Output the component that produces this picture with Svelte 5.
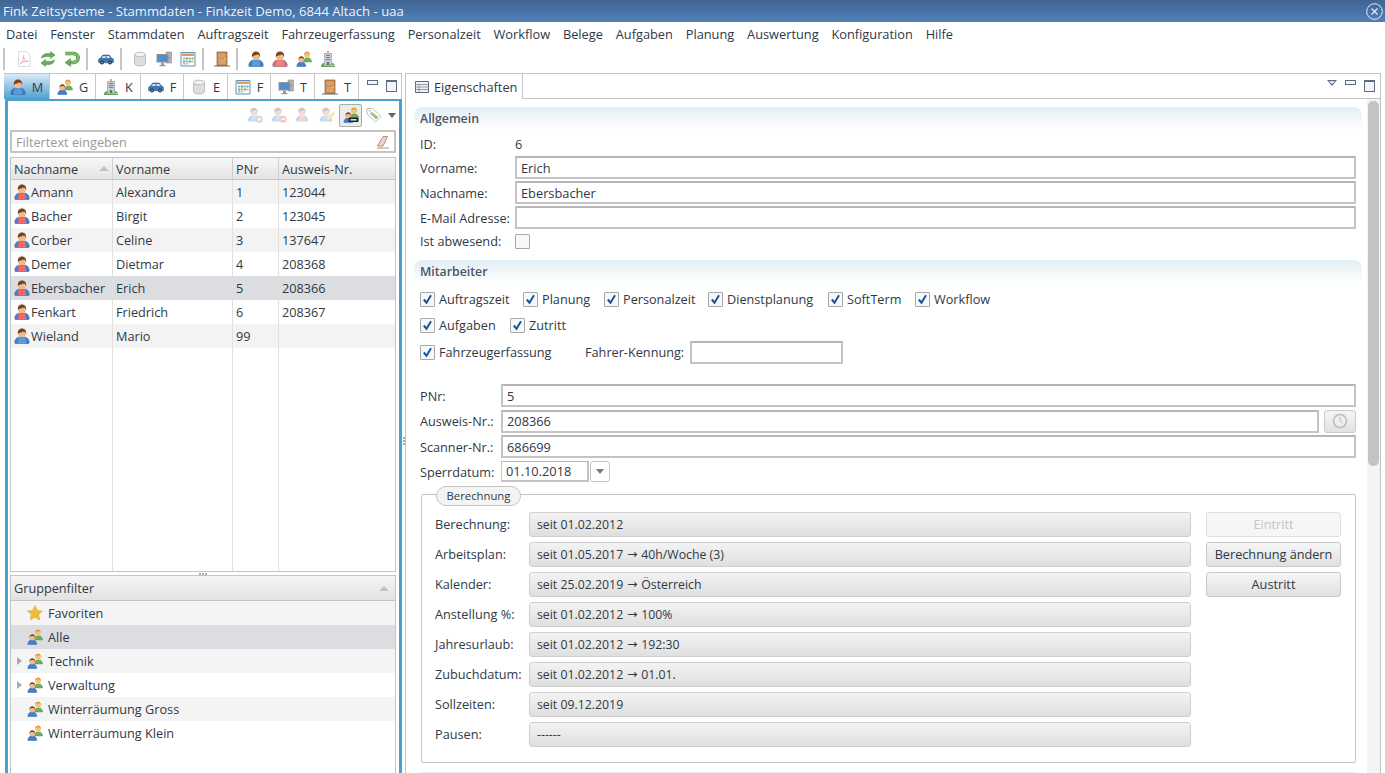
<script lang="ts">
  const menus = ['Datei','Fenster','Stammdaten','Auftragszeit','Fahrzeugerfassung','Personalzeit','Workflow','Belege','Aufgaben','Planung','Auswertung','Konfiguration','Hilfe'];
  const tabs = [
    { icon: 'person', label: 'M', w: 46 },
    { icon: 'group', label: 'G', w: 46 },
    { icon: 'building', label: 'K', w: 45 },
    { icon: 'car', label: 'F', w: 43 },
    { icon: 'db', label: 'E', w: 44 },
    { icon: 'cal', label: 'F', w: 43 },
    { icon: 'monitor', label: 'T', w: 44 },
    { icon: 'door', label: 'T', w: 44 },
  ];
  const people = [
    ['Amann','Alexandra','1','123044'],
    ['Bacher','Birgit','2','123045'],
    ['Corber','Celine','3','137647'],
    ['Demer','Dietmar','4','208368'],
    ['Ebersbacher','Erich','5','208366'],
    ['Fenkart','Friedrich','6','208367'],
    ['Wieland','Mario','99',''],
  ];
  const groups = [
    { name: 'Favoriten', icon: 'star', arrow: false },
    { name: 'Alle', icon: 'group', arrow: false },
    { name: 'Technik', icon: 'group', arrow: true },
    { name: 'Verwaltung', icon: 'group', arrow: true },
    { name: 'Winterräumung Gross', icon: 'group', arrow: false },
    { name: 'Winterräumung Klein', icon: 'group', arrow: false },
  ];
  const calc = [
    ['Berechnung:','seit 01.02.2012',''],
    ['Arbeitsplan:','seit 01.05.2017','40h/Woche (3)'],
    ['Kalender:','seit 25.02.2019','Österreich'],
    ['Anstellung %:','seit 01.02.2012','100%'],
    ['Jahresurlaub:','seit 01.02.2012','192:30'],
    ['Zubuchdatum:','seit 01.02.2012','01.01.'],
    ['Sollzeiten:','seit 09.12.2019',''],
    ['Pausen:','------',''],
  ];
</script>

{#snippet person(arms = '#3f7fd0', torso = '#5a9be0')}
  <svg class="ic" viewBox="0 0 16 16">
    <path d="M.8 14.500c0-2.800 1.400-4.500 3.700-5.300h7c2.300.8 3.700 2.500 3.700 5.300 0 .6-.4 1-1 1H1.800c-.6 0-1-.4-1-1z" fill={arms} stroke="#2a558f" stroke-width=".5"/>
    <path d="M4.500 9.200h7l.6 6.300H3.900z" fill={torso}/>
    <circle cx="8" cy="5.200" r="3.900" fill="#edb98f"/>
    <path d="M3.900 6C3.300 2.300 5.800.6 8 .6s4.700 1.700 4.100 5.400c-.5-1.500-1.300-2.300-2.300-2.600C8.300 4.200 5 4.200 3.900 6z" fill="#7a4420"/>
  </svg>
{/snippet}

{#snippet badged(torso: string, badge: string)}
  <svg class="ic dim" viewBox="0 0 16 16">
    <path d="M.8 13.500c0-2.500 1.400-4 3.200-4.700h6c1.800.7 3.200 2.200 3.200 4.700 0 .6-.4 1-1 1H1.800c-.6 0-1-.4-1-1z" fill="#8fbbe6"/>
    <path d="M4.500 8.800h5l.6 5.700H3.900z" fill={torso}/>
    <circle cx="7" cy="4.800" r="3.600" fill="#e5c4ab"/>
    <path d="M3.400 5.200C3 2.300 5 .8 7 .8s4 1.500 3.600 4.400c-.5-1.200-1.200-1.800-2-2C7 3.800 4.400 3.800 3.400 5.200z" fill="#b59377"/>
    {#if badge === 'add'}
      <circle cx="12.200" cy="12.200" r="3.500" fill="#a9bfa0"/><path d="M10.300 12.200h3.800M12.200 10.300v3.800" stroke="#fff" stroke-width="1.200"/>
    {:else if badge === 'del'}
      <circle cx="12.200" cy="12.200" r="3.500" fill="#eba58f"/><path d="M10.300 12.200h3.800" stroke="#fff" stroke-width="1.400"/>
    {:else if badge === 'edit'}
      <path d="M7.500 13.500l.6-2.700 6-6 2 2-6 6z" fill="#f2d596" stroke="#e0bf7a" stroke-width=".5"/>
    {/if}
  </svg>
{/snippet}

{#snippet group(chain = false)}
  <svg class="ic" viewBox="0 0 16 16">
    <path d="M7 11c0-2 1.500-3.500 3-4h3c1.500.5 2.500 2 2.500 4z" fill="#6fae5a" stroke="#4a8a3e" stroke-width=".4"/>
    <circle cx="11" cy="3.800" r="2.900" fill="#efc483"/>
    <path d="M8.200 3.800C8 1.500 10 .6 11 .6s3 .9 2.800 3.200c-.5-.9-1.600-1.500-2.800-1.500s-2.300.6-2.800 1.500z" fill="#d99a33"/>
    <path d="M.8 15.500c0-2.500 1.500-4 3-4.500h3c1.500.5 3 2 3 4.500z" fill="#3f7fd0" stroke="#2a558f" stroke-width=".4"/>
    <circle cx="5.300" cy="8.500" r="2.900" fill="#edb98f"/>
    <path d="M2.500 8.500C2.300 6.200 4.300 5.300 5.300 5.300s3 .9 2.800 3.200c-.6-.9-1.600-1.400-2.800-1.400s-2.200.5-2.800 1.400z" fill="#7a4420"/>
    {#if chain}
      <rect x="5.500" y="10.500" width="10" height="4.600" rx="1.200" fill="#222"/>
      <rect x="7.500" y="12" width="6" height="1.600" fill="#ddd"/>
    {/if}
  </svg>
{/snippet}

{#snippet building()}
  <svg class="ic" viewBox="0 0 16 16">
    <path d="M8 0v2.500" stroke="#d04040"/>
    <path d="M4.500 2.500h7v11.500h-7z" fill="#c6d0d6" stroke="#7c8a92" stroke-width=".6"/>
    <path d="M6 4.500h4M6 6.500h4M6 8.500h4" stroke="#4f86bd"/>
    <path d="M6.800 11h2.400v3H6.800z" fill="#66727a"/>
    <path d="M1 15c.5-2 1.500-3 3-3v3zM15 15c-.5-2-1.500-3-3-3v3zM1 14.500h14V16H1z" fill="#63a650"/>
  </svg>
{/snippet}

{#snippet car()}
  <svg class="ic" viewBox="0 0 16 16">
    <path d="M.5 11V8.800c0-1 1-1.500 2-1.800l1.800-2.500c.3-.4.6-.5 1-.5h5.400c.4 0 .7.100 1 .5L13.500 7c1 .2 2 .8 2 1.800V11c0 .4-.3.800-.8.800H1.300c-.5 0-.8-.4-.8-.8z" fill="#3f78b8" stroke="#264f80" stroke-width=".5"/>
    <path d="M5 5h2.500v2H3.600zM8.500 5H11l1.300 2H8.500z" fill="#cfe2f2"/>
    <circle cx="4" cy="11.500" r="1.900" fill="#333"/><circle cx="12" cy="11.500" r="1.900" fill="#333"/>
    <circle cx="4" cy="11.500" r=".8" fill="#bbb"/><circle cx="12" cy="11.500" r=".8" fill="#bbb"/>
  </svg>
{/snippet}

{#snippet db()}
  <svg class="ic" viewBox="0 0 16 16">
    <path d="M2.500 3.500v9c0 1.400 2.500 2.500 5.500 2.500s5.500-1.100 5.500-2.500v-9z" fill="#dedede" stroke="#a9a9a9" stroke-width=".7"/>
    <ellipse cx="8" cy="3.500" rx="5.500" ry="2.300" fill="#f2f2f2" stroke="#a9a9a9" stroke-width=".7"/>
  </svg>
{/snippet}

{#snippet monitor()}
  <svg class="ic" viewBox="0 0 16 16">
    <path d="M10 1h5.500v11H10z" fill="#b4b4b4" stroke="#7f7f7f" stroke-width=".5"/>
    <path d="M.5 3h12v8.500H.5z" fill="#8f9498"/>
    <path d="M1.500 4h10v6.500h-10z" fill="#4f8fcf"/>
    <path d="M5 11.500h3V14H5zM3.500 14h6v1.200h-6z" fill="#9a9a9a"/>
    <path d="M12.500 6h2v1h-2z" fill="#5aa95a"/>
  </svg>
{/snippet}

{#snippet cal()}
  <svg class="ic" viewBox="0 0 16 16">
    <path d="M1 1.500h14v13.500H1z" fill="#fff" stroke="#5d8fc0"/>
    <path d="M2 2.500h12v2.500H2z" fill="#e8975a"/>
    <path d="M3 6.500h2.500v2H3zM9 6.500h2.500v2H9zM6 9.500h2.500v2H6zM3 12h2.500v1.500H3z" fill="#8fb7da"/>
    <path d="M6 6.500h2.500v2H6zM3 9.500h2.500v2H3zM9 9.500h2.500v2H9zM12 6.500h1.500v2H12z" fill="#72b06a"/>
    <path d="M6 12h2.500v1.500H6zM12 9.500h1.500v2H12z" fill="#e9c46a"/>
  </svg>
{/snippet}

{#snippet door()}
  <svg class="ic" viewBox="0 0 16 16">
    <path d="M3 1h10v13.500H3z" fill="#c88e52" stroke="#8a5a2c" stroke-width=".7"/>
    <path d="M4.500 2.500h7v4h-7zM4.500 8h7v5h-7z" fill="#d6a36c"/>
    <circle cx="11.300" cy="8" r=".9" fill="#f2d24a"/>
    <path d="M0 15h16" stroke="#666"/>
  </svg>
{/snippet}

{#snippet pdf()}
  <svg class="ic" viewBox="0 0 16 16">
    <path d="M2.500 .5h8l3.500 3.500v11.500H2.500z" fill="#fff" stroke="#dcdcdc"/>
    <path d="M4 13c2-1 4-5 3.600-8.500C7.300 7 9.500 10.500 12.500 10.500 9.500 9.800 6 11 4 13z" fill="none" stroke="#eeb0a8"/>
  </svg>
{/snippet}

{#snippet refresh()}
  <svg class="ic" viewBox="0 0 16 16">
    <path d="M1.500 7c.5-3 3-4.500 5.500-4.500h3.500V.5L15 4l-4.500 3.500V5.500H7C5.500 5.500 4 6 1.500 7z" fill="#68ad5a" stroke="#3f8a3a" stroke-width=".5"/>
    <path d="M14.500 9c-.5 3-3 4.500-5.500 4.500H5.500v2L1 12l4.500-3.500v2H9c1.500 0 3-.5 5.500-1.500z" fill="#68ad5a" stroke="#3f8a3a" stroke-width=".5"/>
  </svg>
{/snippet}

{#snippet undo()}
  <svg class="ic" viewBox="0 0 16 16">
    <path d="M1.500 2.500h8c2.500 0 4.500 1.700 4.500 4.500s-2 4.500-4.500 4.500H6" fill="none" stroke="#3f8a3a" stroke-width="3.600"/>
    <path d="M1.500 2.500h8c2.500 0 4.500 1.700 4.500 4.500s-2 4.500-4.500 4.500H6" fill="none" stroke="#7dba6c" stroke-width="2.400"/>
    <path d="M6.500 7.500v8L1 11.500z" fill="#68ad5a" stroke="#3f8a3a" stroke-width=".5"/>
  </svg>
{/snippet}

{#snippet star()}
  <svg class="ic" viewBox="0 0 16 16">
    <path d="M8 .5l2.300 5 5.200.6-3.900 3.500 1.100 5.400L8 12.300 3.300 15l1.100-5.400L.5 6.100l5.200-.6z" fill="#eebb3a" stroke="#d9a227" stroke-width=".5"/>
  </svg>
{/snippet}

{#snippet icon(name: string)}
  {#if name === 'person'}{@render person()}
  {:else if name === 'group'}{@render group()}
  {:else if name === 'building'}{@render building()}
  {:else if name === 'car'}{@render car()}
  {:else if name === 'db'}{@render db()}
  {:else if name === 'cal'}{@render cal()}
  {:else if name === 'monitor'}{@render monitor()}
  {:else if name === 'door'}{@render door()}
  {:else if name === 'star'}{@render star()}
  {/if}
{/snippet}

{#snippet minmax()}
  <span class="min"></span><span class="max"></span>
{/snippet}

{#snippet check(label: string, w: number)}
  <span class="chk" style="width:{w}px">
    <span class="box">
      <svg viewBox="0 0 13 13" width="13" height="13"><path d="M2.800 6.500l2.700 3.200 4.500-7.400" fill="none" stroke="#17559c" stroke-width="2"/></svg>
    </span>
    <span>{label}</span>
  </span>
{/snippet}

<div class="app">
  <div class="title">
    <span>Fink Zeitsysteme - Stammdaten - Finkzeit Demo, 6844 Altach - uaa</span>
    <svg class="close" viewBox="0 0 17 17" width="17" height="17">
      <circle cx="8.500" cy="8.500" r="7.800" fill="none" stroke="#e6edf5" stroke-width="1"/>
      <path d="M5.500 5.500l6 6M11.500 5.500l-6 6" stroke="#e6edf5" stroke-width="1.200"/>
    </svg>
  </div>

  <div class="menu">
    {#each menus as m}<span>{m}</span>{/each}
  </div>

  <div class="toolbar">
    <i class="sep"></i>
    {@render pdf()}{@render refresh()}{@render undo()}
    <i class="sep"></i>
    {@render car()}
    <i class="sep"></i>
    {@render db()}{@render monitor()}{@render cal()}
    <i class="sep"></i>
    {@render door()}
    <i class="sep"></i>
    {@render person()}{@render person('#ee6a5f', '#f08478')}{@render group()}{@render building()}
  </div>

  <div class="work">
    <div class="left">
      <div class="ltabs">
        {#each tabs as t, i}
          <div class="ltab" class:active={i === 0} style="width:{t.w}px">
            {@render icon(t.icon)}<span>{t.label}</span>
          </div>
        {/each}
        <div class="ltools">{@render minmax()}</div>
      </div>
      <div class="lbody">
        <div class="ltoolbar">
          {@render badged('#a9c9ea', 'add')}
          {@render badged('#a9c9ea', 'del')}
          {@render badged('#f0b8b0', '')}
          {@render badged('#a9c9ea', 'edit')}
          <span class="toggled">{@render group(true)}</span>
          <svg class="ic" viewBox="0 0 16 16"><path d="M1 1.500h6l8 8-5.500 5.500-8.500-8z" fill="#fff" stroke="#b5b5b5" stroke-width=".9"/><path d="M5.500 5l7 5-2.500 2.500-6-6z" fill="#9cc27e"/><circle cx="3.600" cy="3.800" r="1" fill="#bbb"/></svg>
          <i class="tri"></i>
        </div>
        <div class="filter">
          <span>Filtertext eingeben</span>
          <svg viewBox="0 0 14 14" width="14" height="14"><path d="M1.500 11l5.500-9.500h4.500L7 11zM1 13h12" fill="#ecd6ca" stroke="#a58570" stroke-width=".9"/></svg>
        </div>
        <div class="table">
          <div class="thead">
            <div class="c1">Nachname<i class="sort"></i></div>
            <div class="c2">Vorname</div>
            <div class="c3">PNr</div>
            <div class="c4">Ausweis-Nr.</div>
          </div>
          <div class="tbody">
            {#each people as p, i}
              <div class="tr" class:odd={i % 2 === 0} class:sel={i === 4}>
                <div class="c1">
                  {#if p[0] === 'Wieland'}{@render person()}{:else}{@render person('#3f7fd0', '#ee6a5f')}{/if}
                  <span>{p[0]}</span>
                </div>
                <div class="c2">{p[1]}</div>
                <div class="c3">{p[2]}</div>
                <div class="c4">{p[3]}</div>
              </div>
            {/each}
            <div class="tr fill">
              <div class="c1"></div><div class="c2"></div><div class="c3"></div><div class="c4"></div>
            </div>
          </div>
        </div>
        <div class="sash"><i></i><i></i><i></i></div>
        <div class="gfilter">
          <div class="ghead">Gruppenfilter<i class="sort"></i></div>
          {#each groups as g, i}
            <div class="grow" class:odd={i % 2 === 0} class:sel={i === 1}>
              <span class="arrow">{#if g.arrow}<i></i>{/if}</span>
              {@render icon(g.icon)}
              <span>{g.name}</span>
            </div>
          {/each}
        </div>
      </div>
    </div>

    <div class="vsash"><i></i><i></i><i></i></div>

    <div class="right">
      <div class="rtabs">
        <div class="rtab">
          <svg class="ic" viewBox="0 0 16 16"><path d="M1.500 2.500h13v11h-13z" fill="#f2f2f2" stroke="#5d6b80"/><path d="M1.500 5.500h13M1.500 8h13M1.500 10.500h13M5 5.500v8" stroke="#7c8899" stroke-width=".8"/></svg>
          <span>Eigenschaften</span>
        </div>
        <div class="rtools"><i class="tri-o"></i>{@render minmax()}</div>
      </div>
      <div class="rbody">
        <div class="form">
          <div class="sect">Allgemein</div>
          <div class="row id"><label>ID:</label><span>6</span></div>
          <div class="row"><label>Vorname:</label><div class="inp">Erich</div></div>
          <div class="row"><label>Nachname:</label><div class="inp">Ebersbacher</div></div>
          <div class="row"><label>E-Mail Adresse:</label><div class="inp"></div></div>
          <div class="row cb"><label>Ist abwesend:</label><span class="box"></span></div>

          <div class="sect second">Mitarbeiter</div>
          <div class="checks first">
            {@render check('Auftragszeit', 103)}
            {@render check('Planung', 81)}
            {@render check('Personalzeit', 104)}
            {@render check('Dienstplanung', 120)}
            {@render check('SoftTerm', 87)}
            {@render check('Workflow', 80)}
          </div>
          <div class="checks">
            {@render check('Aufgaben', 90)}
            {@render check('Zutritt', 60)}
          </div>
          <div class="checks third">
            {@render check('Fahrzeugerfassung', 165)}
            <span class="fk">Fahrer-Kennung:</span>
            <div class="inp small"></div>
          </div>

          <div class="nums">
            <div class="row2"><label>PNr:</label><div class="inp">5</div></div>
            <div class="row2"><label>Ausweis-Nr.:</label><div class="inp">208366</div>
              <span class="clock"><svg viewBox="0 0 16 16" width="16" height="16"><circle cx="8" cy="8" r="6.500" fill="#eee" stroke="#bdbdbd" stroke-width="1.500"/><path d="M8 4v4l2.500 2" fill="none" stroke="#bbb"/></svg></span>
            </div>
            <div class="row2"><label>Scanner-Nr.:</label><div class="inp">686699</div></div>
            <div class="row2 date"><label>Sperrdatum:</label><div class="inp dt">01.10.2018</div><span class="dd"><i></i></span></div>
          </div>

          <div class="gbox">
            <span class="legend">Berechnung</span>
            <div class="gcols">
              <div class="glist">
                {#each calc as c}
                  <div class="grow2">
                    <label>{c[0]}</label>
                    <div class="ro">{c[1]}{#if c[2]}<span class="arr">→</span>{c[2]}{/if}</div>
                  </div>
                {/each}
              </div>
              <div class="gbtns">
                <div class="btn off">Eintritt</div>
                <div class="btn">Berechnung ändern</div>
                <div class="btn">Austritt</div>
              </div>
            </div>
          </div>
          <div class="sect last"></div>
        </div>
        <div class="sbar"><div class="thumb"></div></div>
      </div>
    </div>
  </div>
</div>

<style>
  :global(body) { margin: 0; background: #fff; overflow: hidden; }
  .app {
    width: 1385px; height: 773px; overflow: hidden;
    font-family: "Open Sans", "Noto Sans", sans-serif;
    font-size: 12.7px; color: #2f3945;
    display: flex; flex-direction: column;
  }
  .ic { width: 16px; height: 16px; flex: none; display: block; }
  .ic.dim { opacity: .55; }
  i { display: block; font-style: normal; }

  .title {
    height: 22px; flex: none; padding: 0 3px;
    display: flex; align-items: center; justify-content: space-between;
    background: linear-gradient(#3f6493, #5180b8);
    color: #eef3f9; font-size: 13.1px;
  }
  .close { margin-right: -1px; }

  .menu { height: 24px; flex: none; display: flex; align-items: center; gap: 12.8px; padding-left: 6px; font-size: 12.8px; }

  .toolbar { height: 26px; flex: none; display: flex; align-items: center; gap: 8px; padding-left: 5px; }
  .sep { width: 2px; height: 22px; background: #c6c6c6; margin: 0 2px 0 -2px; }
  .sep:first-child { margin-right: 3px; }

  .work { flex: 1; display: flex; min-height: 0; padding: 1px 4px 0 4px; }

  .left { width: 398px; flex: none; display: flex; flex-direction: column; }
  .ltabs { height: 26px; flex: none; display: flex; border-top: 1px solid #c4c4c4; box-sizing: border-box; border-right: 1px solid #c4c4c4; }
  .ltab {
    display: flex; align-items: center; justify-content: center; gap: 6px;
    border-right: 1px solid #c9c9c9; box-sizing: border-box;
  }
  .ltab.active { background: linear-gradient(#dbeaf5, #4ca0cf); }
  .ltools { flex: 1; display: flex; align-items: flex-start; gap: 8px; padding: 6px 0 0 8px; }
  .min { width: 9px; height: 3px; border: 1px solid #5d6b80; background: #f4f4f4; display: block; }
  .max { width: 9px; height: 9px; border: 1px solid #5d6b80; border-top-width: 2px; background: #f4f4f4; display: block; }

  .lbody {
    flex: 1; min-height: 0; display: flex; flex-direction: column;
    border: solid #4ca0cf; border-width: 2px 3px 0 3px; padding: 0 3px 0 2px; margin-left: 1px;
  }
  .ltoolbar { height: 28px; flex: none; display: flex; align-items: center; justify-content: flex-end; gap: 8px; }
  .toggled {
    width: 23px; height: 23px; border: 1px solid #aaa; border-radius: 2px; background: #ececec;
    display: flex; align-items: center; justify-content: center; box-sizing: border-box; margin: 0 -4px;
  }
  .tri { width: 0; height: 0; border: 4px solid transparent; border-top: 5px solid #666; border-bottom: 0; margin-left: -2px; }

  .filter {
    height: 23px; flex: none; box-sizing: border-box; border: 2px solid #c4c4c4; border-radius: 1px;
    display: flex; align-items: center; justify-content: space-between; padding: 0 4px;
    color: #9a9a9a; margin-top: 1px;
  }
  .table { margin-top: 4px; height: 415px; flex: none; border: 1px solid #c4c4c4; box-sizing: border-box; display: flex; flex-direction: column; }
  .thead { height: 21px; flex: none; display: flex; background: linear-gradient(#f7f7f7, #e4e4e4); border-bottom: 1px solid #c4c4c4; }
  .thead > div, .tr > div { box-sizing: border-box; padding-left: 3px; display: flex; align-items: center; border-right: 1px solid #e0e0e0; }
  .thead > div { border-right-color: #cfcfcf; }
  .c1 { width: 102px; flex: none; }
  .c2 { width: 120px; flex: none; }
  .c3 { width: 46px; flex: none; }
  .c4 { flex: 1; }
  .thead > .c4, .tr > .c4 { border-right: 0; }
  .tbody { flex: 1; display: flex; flex-direction: column; }
  .tr { height: 24px; flex: none; display: flex; }
  .tr.odd { background: #f3f3f3; }
  .tr.sel { background: #dcdde1; }
  .tr.fill { flex: 1; }
  .tr .c1 { gap: 1px; }
  .sort { width: 0; height: 0; border: 5px solid transparent; border-bottom: 5px solid #c4c4c4; border-top: 0; margin-left: auto; margin-right: 3px; }
  .sash { height: 3px; flex: none; display: flex; justify-content: center; align-items: center; gap: 1px; }
  .sash i { width: 2px; height: 2px; background: #a8a8a8; }

  .gfilter { flex: 1; border: 1px solid #c4c4c4; border-bottom: 0; display: flex; flex-direction: column; min-height: 0; }
  .ghead {
    height: 24px; flex: none; display: flex; align-items: center; padding: 0 3px;
    background: linear-gradient(#f6f6f6, #e2e2e2); border-bottom: 1px solid #c4c4c4;
  }
  .grow { height: 24px; flex: none; display: flex; align-items: center; }
  .grow.odd { background: #f4f4f4; }
  .grow.sel { background: #dcdde1; }
  .grow > span:last-child { margin-left: 5px; }
  .arrow { width: 16px; flex: none; display: flex; justify-content: center; }
  .arrow i { width: 0; height: 0; border: 4px solid transparent; border-left: 5px solid #aaa; border-right: 0; }

  .vsash { width: 3px; flex: none; display: flex; flex-direction: column; align-items: center; justify-content: center; gap: 1px; padding-top: 36px; }
  .vsash i { width: 2px; height: 2px; background: #a8a8a8; }

  .right { flex: 1; min-width: 0; display: flex; flex-direction: column; border: 1px solid #c4c4c4; border-bottom: 0; }
  .rtabs { height: 24px; flex: none; display: flex; justify-content: space-between; border-bottom: 1px solid #c4c4c4; }
  .rtab { display: flex; align-items: center; gap: 4px; padding: 0 5px 0 8px; border-right: 1px solid #c4c4c4; height: 25px; background: #fff; box-sizing: border-box; font-size: 12.8px; }
  .rtools { display: flex; align-items: flex-start; gap: 8px; padding: 6px 5px 0 0; }
  .tri-o { width: 10px; height: 6px; background: #5d6b80; clip-path: polygon(0 0, 100% 0, 50% 100%, 40% 80%, 80% 20%, 20% 20%, 60% 80%, 50% 100%); }
  .rbody { flex: 1; min-height: 0; display: flex; overflow: hidden; }
  .form { flex: 1; min-width: 0; padding: 8px 5px 0 8px; }
  .sbar { width: 13px; flex: none; background: #f4f4f4; padding: 2px 1px 0; box-sizing: border-box; }
  .thumb { height: 365px; border-radius: 5px; background: #c4c4c4; }

  .sect {
    height: 23px; line-height: 23px; padding-left: 6px; border-radius: 8px 8px 0 0;
    background: linear-gradient(#e3eef5, #fff); color: #4c5560; font-weight: 600; font-size: 12.3px;
  }
  .sect.second { margin-top: 10px; }
  .sect.last { margin-top: 9px; }
  .row { display: flex; align-items: center; height: 25px; padding-left: 6px; }
  .row label { width: 95px; flex: none; }
  .row.id { height: 25px; box-sizing: border-box; padding-top: 3px; }
  .row.cb { height: 18px; margin-top: 2px; }
  .row .inp { flex: 1; margin-right: 6px; }
  .inp {
    height: 23px; box-sizing: border-box; border: 2px solid #c4c4c4; border-top-color: #b6b6b6;
    display: flex; align-items: center; padding-left: 4px; background: #fff; font-size: 12.8px;
  }
  .box {
    width: 15px; height: 15px; box-sizing: border-box; border: 1px solid #a8a8a8; background: #f8f8f8;
    display: inline-flex; align-items: center; justify-content: center; flex: none; border-radius: 1px;
  }
  .checks { display: flex; align-items: center; padding-left: 6px; height: 26px; }
  .checks.first { margin-top: 3px; }
  .checks.third { height: 28px; }
  .chk { display: flex; align-items: center; gap: 4px; flex: none; white-space: nowrap; }
  .fk { width: 105px; flex: none; }
  .inp.small { width: 153px; }

  .nums { margin-top: 17px; padding: 0 6px; }
  .row2 { display: flex; align-items: center; height: 25.5px; }
  .row2 label { width: 81px; flex: none; }
  .row2 .inp { flex: 1; }
  .row2.date { height: 24px; }
  .row2 .inp.dt { flex: none; width: 88px; height: 21px; border-width: 1px 2px 2px 1px; }
  .dd {
    width: 20px; height: 21px; margin-left: 1px; border: 1px solid #c4c4c4; border-radius: 3px; box-sizing: border-box;
    display: flex; align-items: center; justify-content: center;
  }
  .dd i { width: 0; height: 0; border: 4px solid transparent; border-top: 5px solid #777; border-bottom: 0; }
  .clock {
    width: 32px; height: 23px; margin-left: 5px; flex: none; box-sizing: border-box; border: 1px solid #c9c9c9; border-radius: 3px;
    background: linear-gradient(#f4f4f4, #e2e2e2); display: flex; align-items: center; justify-content: center;
  }

  .gbox { margin: 10px 6px 0 7px; border: 1px solid #c4c4c4; border-radius: 2px; height: 269px; box-sizing: border-box; position: relative; padding: 17px 14px 0 13px; }
  .legend {
    position: absolute; left: 14px; top: -9px; width: 85px; height: 20px; box-sizing: border-box;
    border: 1px solid #c4c4c4; border-radius: 10px; background: #f4f4f4;
    display: flex; align-items: center; justify-content: center; font-size: 11.3px;
  }
  .gcols { display: flex; gap: 15px; }
  .glist { flex: 1; min-width: 0; display: flex; flex-direction: column; gap: 5px; }
  .grow2 { display: flex; align-items: center; height: 25px; }
  .grow2 label { width: 94px; flex: none; }
  .ro {
    flex: 1; height: 25px; box-sizing: border-box; border: 1px solid #cfcfcf; border-radius: 3px; padding-left: 7px;
    display: flex; align-items: center; background: linear-gradient(#f3f3f3, #dfdfdf); font-size: 12.3px;
  }
  .arr { font-family: "DejaVu Sans", sans-serif; margin: 0 4px; font-size: 12px; }
  .gbtns { width: 135px; flex: none; display: flex; flex-direction: column; gap: 5px; }
  .btn {
    height: 25px; box-sizing: border-box; border: 1px solid #c9c9c9; border-radius: 3px;
    display: flex; align-items: center; justify-content: center;
    background: linear-gradient(#f6f6f6, #e0e0e0);
  }
  .btn.off { background: #f6f6f6; color: #c4c4c4; border-color: #dedede; }
</style>
